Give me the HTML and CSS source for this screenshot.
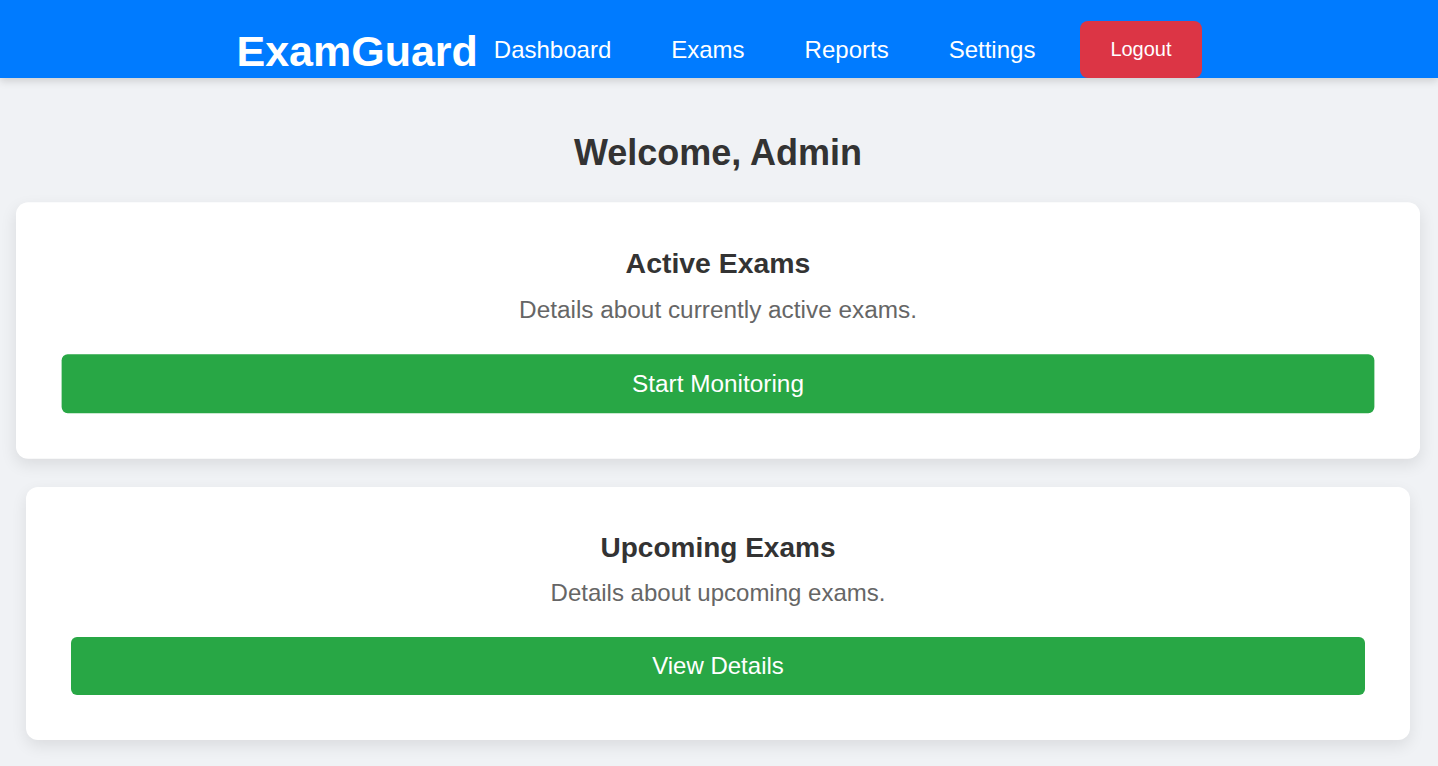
FILE: index.html
```html
<!DOCTYPE html>
<html lang="en">
<head>
<meta charset="utf-8">
<title>ExamGuard</title>
<link rel="stylesheet" href="styles.css">
</head>
<body>
<nav class="navbar">
  <h1 class="logo">ExamGuard</h1>
  <ul class="nav-links">
    <li><a href="#">Dashboard</a></li>
    <li><a href="#">Exams</a></li>
    <li><a href="#">Reports</a></li>
    <li><a href="#">Settings</a></li>
  </ul>
  <button class="logout-btn">Logout</button>
</nav>
<main class="main">
  <h2 class="welcome">Welcome, Admin</h2>
  <section class="card card--hover">
    <h3 class="card-title">Active Exams</h3>
    <p class="card-text">Details about currently active exams.</p>
    <button class="card-btn">Start Monitoring</button>
  </section>
  <section class="card">
    <h3 class="card-title">Upcoming Exams</h3>
    <p class="card-text">Details about upcoming exams.</p>
    <button class="card-btn">View Details</button>
  </section>
</main>
</body>
</html>
```

FILE: styles.css
```css
* { box-sizing: border-box; }

html, body {
  margin: 0;
  padding: 0;
}

body {
  background: #f0f2f5;
  font-family: "Liberation Sans", Arial, sans-serif;
  color: #333;
  height: 766px;
  overflow: hidden;
}

.navbar {
  height: 78px;
  padding-top: 21px;
  background: #007bff;
  display: flex;
  justify-content: center;
  align-items: center;
  box-shadow: 0 3px 8px rgba(0, 0, 0, 0.15);
  position: relative;
  z-index: 1;
}

.logo {
  margin: 4px 16px 0 0;
  font-size: 43px;
  font-weight: bold;
  color: #fff;
  line-height: normal;
}

.nav-links {
  list-style: none;
  margin: 0;
  padding: 0;
  display: flex;
  align-items: center;
  gap: 60px;
}

.nav-links a {
  color: #fff;
  text-decoration: none;
  font-size: 24px;
  line-height: normal;
}

.logout-btn {
  margin-left: 45px;
  height: 57px;
  padding: 0 30px;
  border: none;
  border-radius: 8px;
  background: #dc3545;
  color: #fff;
  font-family: "Liberation Sans", Arial, sans-serif;
  font-size: 20px;
  cursor: pointer;
}

.main {
  padding: 54px 28px 0 26px;
}

.welcome {
  margin: 0 0 30px;
  text-align: center;
  font-size: 36px;
  font-weight: bold;
  color: #333;
  line-height: normal;
}

.card {
  background: #fff;
  border-radius: 12px;
  padding: 45px;
  margin-bottom: 30px;
  text-align: center;
  box-shadow: 0 6px 16px rgba(0, 0, 0, 0.09);
}

.card--hover {
  transform: scale(1.0145);
}

.card-title {
  margin: 0 0 15px;
  font-size: 28px;
  font-weight: bold;
  color: #333;
  line-height: normal;
}

.card-text {
  margin: 0 0 30px;
  font-size: 24px;
  color: #666;
  line-height: normal;
}

.card-btn {
  display: block;
  width: 100%;
  padding: 15px 0;
  border: none;
  border-radius: 6px;
  background: #28a745;
  color: #fff;
  font-family: "Liberation Sans", Arial, sans-serif;
  font-size: 24px;
  line-height: normal;
  cursor: pointer;
}
```
